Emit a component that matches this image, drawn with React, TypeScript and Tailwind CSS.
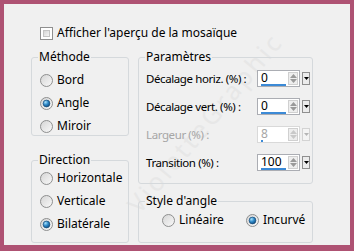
import React from 'react';

const Radio = ({ checked }: { checked?: boolean }) => (
    <svg width="13" height="13" viewBox="0 0 13 13" className="shrink-0">
        <defs>
            <linearGradient id="rbg" x1="0" y1="0" x2="1" y2="1">
                <stop offset="0" stopColor="#d4d4d4" />
                <stop offset="1" stopColor="#fafafa" />
            </linearGradient>
            <radialGradient id="rdot" cx="0.35" cy="0.3" r="0.8">
                <stop offset="0" stopColor="#a8e2fc" />
                <stop offset="0.5" stopColor="#2b86c6" />
                <stop offset="1" stopColor="#0d4676" />
            </radialGradient>
        </defs>
        <circle cx="6.5" cy="6.5" r="6" fill="url(#rbg)" stroke="#8e8f8f" />
        {checked && <circle cx="6.5" cy="6.5" r="3.4" fill="url(#rdot)" stroke="#1a4c78" strokeWidth="0.7" />}
    </svg>
);

const RadioRow = ({ label, checked }: { label: string; checked?: boolean }) => (
    <div className="flex items-center h-[16px] gap-[4px]">
        <Radio checked={checked} />
        <span className="whitespace-nowrap">{label}</span>
    </div>
);

const Group = ({ title, className, children }: { title: string; className: string; children: React.ReactNode }) => (
    <fieldset className={`border border-[#d5d9dc] rounded-[3px] p-0 m-0 min-w-0 ${className}`}>
        <legend className="ml-[6px] px-[1px] leading-[16px] h-[16px]">{title}</legend>
        {children}
    </fieldset>
);

const SpinField = ({ label, value, bar, disabled }: { label: string; value: string; bar: string; disabled?: boolean }) => (
    <div className="flex items-center h-[17px]">
        <span className={`w-[111px] shrink-0 whitespace-nowrap text-[11.5px] tracking-[-0.4px] ${disabled ? 'text-[#a6a6a6]' : 'text-black'}`}>{label}</span>
        <div className={`flex h-[17px] w-[43px] bg-white border ${disabled ? 'border-[#d9d9d9]' : 'border-[#abadb3]'}`}>
            <div className="flex-1 flex flex-col justify-between pl-[3px] pr-[2px]">
                <span className={`leading-[13px] ${disabled ? 'text-[#a6a6a6]' : 'text-black'}`}>{value}</span>
                <div className={`h-[3px] bg-[#3c8ad6] ${bar}`} />
            </div>
            <div className="w-[10px] flex flex-col items-center justify-center gap-[1px] my-[1px] mr-[1px] bg-[#eeeeee] border border-[#d0d0d0]">
                <svg width="7" height="4" viewBox="0 0 7 4"><path d="M0 4 L3.5 0 L7 4 Z" fill={disabled ? '#c9c9c9' : '#9a9a9a'} /></svg>
                <svg width="7" height="4" viewBox="0 0 7 4"><path d="M0 0 L3.5 4 L7 0 Z" fill={disabled ? '#c9c9c9' : '#9a9a9a'} /></svg>
            </div>
        </div>
        <div className={`ml-[2px] w-[8px] h-[13px] flex items-center justify-center border ${disabled ? 'border-[#d3d3d3] bg-[#f4f4f4]' : 'border-[#8f8f8f] bg-[#ececec]'}`}>
            <svg width="5" height="3" viewBox="0 0 5 3"><path d="M0 0 L2.5 3 L5 0 Z" fill={disabled ? '#b5b5b5' : '#000'} /></svg>
        </div>
    </div>
);

export default function App() {
    return (
        <div className="w-[354px] h-[251px] bg-[#ae5273] pt-[4px] pl-[4px] pr-[4px] pb-[6px] font-['Segoe_UI','Noto_Sans',sans-serif] text-[12px] text-black">
            <div className="relative w-full h-full bg-[#f0f0f0] pt-[21px] pl-[27px] overflow-hidden">
                <span className="absolute left-[88px] top-[100px] -rotate-[50deg] text-[25px] tracking-[3px] text-[#e7e7e7] select-none pointer-events-none whitespace-nowrap">
                    VioletteGraphic
                </span>

                <div className="relative flex items-center h-[16px] gap-[4px] pl-[9px]">
                    <div className="w-[13px] h-[13px] border border-[#8f8f8f] bg-white p-[2px]">
                        <div className="w-full h-full bg-gradient-to-br from-[#d6d6d6] to-[#f6f6f6] border border-[#c4c4c4]" />
                    </div>
                    <span>Afficher l'aperçu de la mosaïque</span>
                </div>

                <div className="relative flex gap-[9px] mt-[8px]">
                    <div className="w-[98px] flex flex-col">
                        <Group title="Méthode" className="h-[87px]">
                            <div className="flex flex-col gap-[7px] pt-[7px] pl-[8px]">
                                <RadioRow label="Bord" />
                                <RadioRow label="Angle" checked />
                                <RadioRow label="Miroir" />
                            </div>
                        </Group>
                        <Group title="Direction" className="h-[91px] mt-[16px]">
                            <div className="flex flex-col gap-[7px] pt-[2px] pl-[8px]">
                                <RadioRow label="Horizontale" />
                                <RadioRow label="Verticale" />
                                <RadioRow label="Bilatérale" checked />
                            </div>
                        </Group>
                    </div>
                    <div className="w-[175px] flex flex-col">
                        <Group title="Paramètres" className="h-[135px]">
                            <div className="flex flex-col gap-[11px] pt-[5px] pl-[7px]">
                                <SpinField label="Décalage horiz. (%) :" value="0" bar="w-full" />
                                <SpinField label="Décalage vert. (%) :" value="0" bar="w-full" />
                                <SpinField label="Largeur (%) :" value="8" bar="w-[2px]" disabled />
                                <SpinField label="Transition (%) :" value="100" bar="w-full" />
                            </div>
                        </Group>
                        <Group title="Style d'angle" className="h-[50px] mt-[9px]">
                            <div className="flex items-center pt-[3px] pl-[23px] gap-[22px]">
                                <RadioRow label="Linéaire" />
                                <RadioRow label="Incurvé" checked />
                            </div>
                        </Group>
                    </div>
                </div>
            </div>
        </div>
    );
}
